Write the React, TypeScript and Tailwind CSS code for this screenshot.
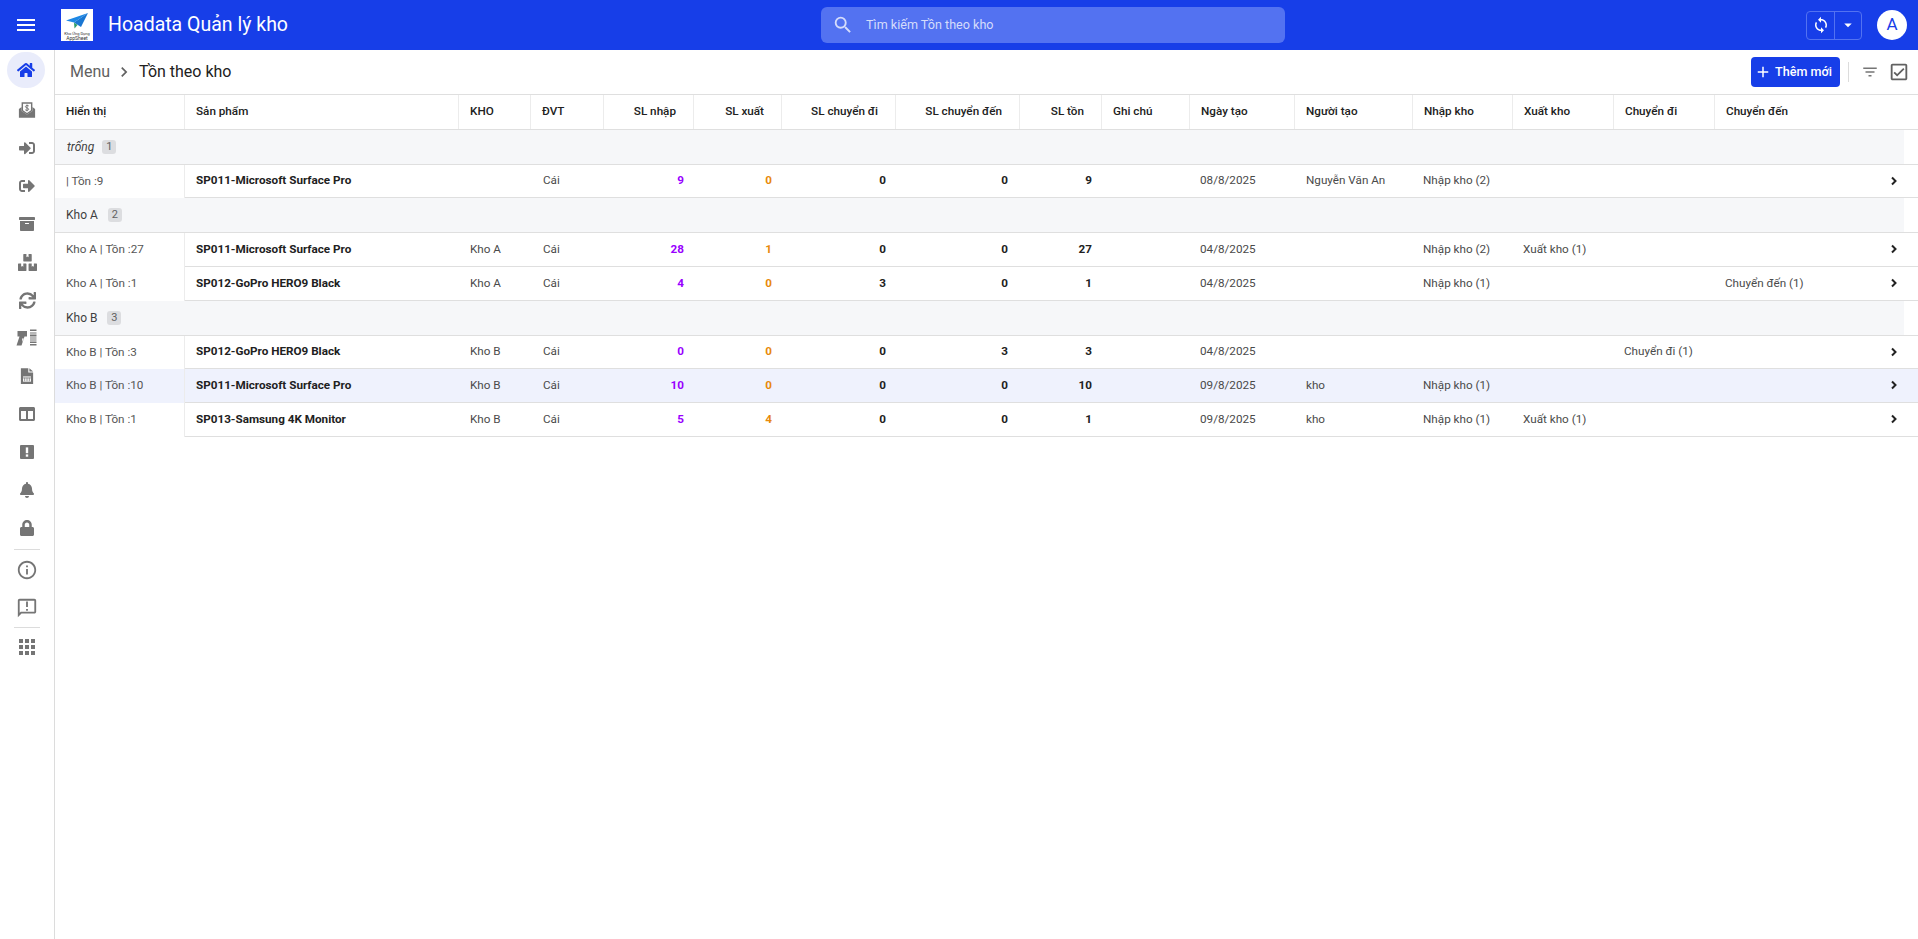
import React from "react";
import { FaHome, FaSignInAlt, FaSignOutAlt, FaArchive, FaBoxes, FaSync, FaColumns, FaBell, FaLock } from "react-icons/fa";
import { MdMenu, MdSearch, MdSync, MdArrowDropDown, MdChevronRight, MdAdd, MdFilterList, MdOutlineCheckBox, MdInfoOutline, MdOutlineAnnouncement, MdApps } from "react-icons/md";

const GRID = "grid grid-cols-[130px_274px_72px_73px_90px_88px_114px_124px_82px_88px_105px_118px_100px_101px_101px_1fr]";

function EnvelopeDollar() {
  return (
    <svg width="18" height="18" viewBox="0 0 20 20" fill="#757575">
      <path d="M1 9 L4 6.8 V11 L10 15 L16 11 V6.8 L19 9 V18.5 H1 Z" />
      <path d="M4 1.5 H16 V11 L10 15 L4 11 Z" fill="#757575" />
      <path d="M5.6 3 H14.4 V10.3 L10 13.2 L5.6 10.3 Z" fill="#fff" />
      <path d="M12 5.6 C11.6 4.9 8.3 4.6 8.2 6.2 C8.1 8 11.9 7.4 11.9 9.2 C11.9 10.8 8.5 10.6 8 9.7 M10 3.9 V11.4" fill="none" stroke="#757575" strokeWidth="1.1" />
    </svg>
  );
}

function Scanner() {
  return (
    <svg width="22" height="18" viewBox="0 0 22 18" fill="#757575">
      <path d="M1.5 2 H11 V7.5 H8.5 L5.5 16.5 H0.5 L3.5 7.5 H1.5 Z" />
      <path d="M6 9.5 H7.8 L6.6 13 Z" fill="#fff" />
      <rect x="14" y="0.5" width="6.5" height="1.5" />
      <rect x="14" y="3.5" width="6.5" height="1" />
      <rect x="14" y="5.5" width="6.5" height="2" />
      <rect x="14" y="8.5" width="6.5" height="1" />
      <rect x="14" y="10.5" width="6.5" height="1" />
      <rect x="14" y="12.5" width="6.5" height="1.5" />
      <rect x="14" y="15" width="6.5" height="1.5" />
    </svg>
  );
}

function FileSheet() {
  return (
    <svg width="14" height="18" viewBox="0 0 16 20" fill="#757575">
      <path d="M1 1 H9.5 V6 H15 V19 H1 Z" />
      <path d="M10.7 1 L15 4.9 H10.7 Z" />
      <rect x="3.5" y="10.5" width="9" height="6" fill="#fff" />
      <path d="M5.4 12 V16 M8 12 V16 M10.6 12 V16 M3.5 12.2 H12.5" stroke="#757575" strokeWidth="0.9" />
    </svg>
  );
}

function ExclSquare() {
  return (
    <svg width="16" height="16" viewBox="0 0 16 16" fill="#757575">
      <rect x="1" y="1" width="14" height="14" rx="1" />
      <rect x="6.8" y="3.4" width="2.4" height="5.8" fill="#fff" />
      <rect x="6.8" y="10.4" width="2.4" height="2.3" fill="#fff" />
    </svg>
  );
}

function Logo() {
  return (
    <div className="flex h-[32px] w-[32px] shrink-0 flex-col items-center bg-white pt-[3px]">
      <svg width="24" height="18" viewBox="0 0 24 18">
        <path d="M1 8.5 L23 1 L9 10.5 Z" fill="#1e88e5" />
        <path d="M23 1 L9 10.5 L16 15 Z" fill="#1976d2" />
        <path d="M9 10.5 L9.5 16.5 L12.5 13 Z" fill="#2e9e6b" />
      </svg>
      <span className="mt-[1px] text-center text-[4px] leading-[5px] text-[#333]">Kho Ứng Dụng</span>
      <span className="text-center text-[5px] leading-[5px] text-[#333]">AppSheet</span>
    </div>
  );
}

function Chevron() {
  return (
    <svg className="mb-[1px]" width="8" height="10" viewBox="0 0 8 10" fill="none" stroke="#222" strokeWidth="2">
      <path d="M2 1.5 L5.5 5 L2 8.5" />
    </svg>
  );
}

function SideItem({ children }: { children: React.ReactNode }) {
  return <div className="flex h-[38px] items-center justify-center">{children}</div>;
}

function Sidebar() {
  return (
    <aside className="flex w-[55px] shrink-0 flex-col border-r border-[#dcdcdc] pt-[2px]">
      <div className="mb-[3px] ml-[7px] flex h-[36px] w-[38px] items-center justify-center rounded-full bg-[#e9ecfb]">
        <FaHome size={18} color="#173ee8" />
      </div>
      <SideItem><EnvelopeDollar /></SideItem>
      <SideItem><FaSignInAlt size={16} color="#757575" /></SideItem>
      <SideItem><FaSignOutAlt size={16} color="#757575" /></SideItem>
      <SideItem><FaArchive size={16} color="#757575" /></SideItem>
      <SideItem><FaBoxes size={19} color="#757575" /></SideItem>
      <SideItem><FaSync size={17} color="#757575" /></SideItem>
      <SideItem><Scanner /></SideItem>
      <SideItem><FileSheet /></SideItem>
      <SideItem><FaColumns size={16} color="#757575" /></SideItem>
      <SideItem><ExclSquare /></SideItem>
      <SideItem><FaBell size={16} color="#757575" /></SideItem>
      <SideItem><FaLock size={16} color="#757575" /></SideItem>
      <div className="ml-[14px] mt-[2px] mb-[1px] h-px w-[26px] bg-[#dcdcdc]" />
      <SideItem><MdInfoOutline size={22} color="#757575" /></SideItem>
      <SideItem><MdOutlineAnnouncement size={22} color="#757575" /></SideItem>
      <div className="ml-[14px] h-px w-[26px] bg-[#dcdcdc]" />
      <SideItem><MdApps size={24} color="#757575" /></SideItem>
    </aside>
  );
}

function Header() {
  return (
    <header className="flex h-[50px] shrink-0 items-center bg-[#173ee8] text-white">
      <div className="ml-[14px] flex w-[24px] justify-center"><MdMenu size={24} /></div>
      <div className="ml-[23px]"><Logo /></div>
      <div className="ml-[15px] w-[713px] text-[19.5px]">Hoadata Quản lý kho</div>
      <div className="flex h-[36px] w-[464px] items-center rounded-[6px] bg-[#5372f1] pl-[11px] text-[12.6px] text-[#d5dcfb]">
        <MdSearch size={22} />
        <span className="ml-[12px]">Tìm kiếm Tồn theo kho</span>
      </div>
      <div className="ml-[521px] flex h-[29px] w-[56px] items-center rounded-[4px] border border-[#5372f1]">
        <div className="flex h-full w-[28px] items-center justify-center border-r border-[#5372f1]"><MdSync size={18} /></div>
        <div className="flex flex-1 items-center justify-center"><MdArrowDropDown size={18} /></div>
      </div>
      <div className="ml-[15px] flex h-[30px] w-[30px] items-center justify-center rounded-full bg-white text-[17px] text-[#173ee8]">A</div>
    </header>
  );
}

function Toolbar() {
  return (
    <div className="flex h-[44px] shrink-0 items-center">
      <span className="ml-[15px] text-[16px] text-[#616161]">Menu</span>
      <span className="ml-[4px] text-[#616161]"><MdChevronRight size={20} /></span>
      <span className="ml-[5px] text-[16px] text-[#212121]">Tồn theo kho</span>
      <div className="ml-auto mr-[8px] flex items-center">
        <button className="flex h-[30px] w-[89px] items-center rounded-[4px] bg-[#173ee8] pl-[3px] text-[12.6px] font-medium text-white">
          <MdAdd size={18} />
          <span className="ml-[3px]">Thêm mới</span>
        </button>
        <div className="ml-[8px] h-[20px] w-px bg-[#dcdcdc]" />
        <span className="ml-[12px] text-[#757575]"><MdFilterList size={18} /></span>
        <span className="ml-[9px] text-[#616161]"><MdOutlineCheckBox size={22} /></span>
      </div>
    </div>
  );
}

type Col = { t: string; right?: boolean };
const cols: Col[] = [
  { t: "Hiển thị" }, { t: "Sản phẩm" }, { t: "KHO" }, { t: "ĐVT" },
  { t: "SL nhập", right: true }, { t: "SL xuất", right: true }, { t: "SL chuyển đi", right: true },
  { t: "SL chuyển đến", right: true }, { t: "SL tồn", right: true }, { t: "Ghi chú" },
  { t: "Ngày tạo" }, { t: "Người tạo" }, { t: "Nhập kho" }, { t: "Xuất kho" }, { t: "Chuyển đi" }, { t: "Chuyển đến" },
];

function HeaderRow() {
  return (
    <div className={`${GRID} h-[36px] border-y border-[#dfdfdf] text-[11.7px] font-medium text-[#212121]`}>
      {cols.map((c, i) => (
        <div
          key={c.t}
          className={`flex items-center ${c.right ? "justify-end pr-[17px]" : "pl-[11px]"} ${i < 15 ? "border-r border-[#ececec]" : ""}`}
        >
          {c.t}
        </div>
      ))}
    </div>
  );
}

function Group({ name, n, italic, h }: { name: string; n: number; italic?: boolean; h: string }) {
  return (
    <div className={`${h} border-b border-[#dfdfdf]`}>
      <div className="flex h-full w-[1849px] items-center bg-[#f6f7f9] pl-[11px] text-[12px] text-[#3f3f3f]">
        <span className={italic ? "ml-[1px] italic" : ""}>{name}</span>
        <span className={`${italic ? "ml-[8px]" : "ml-[10px]"} flex h-[14px] w-[14px] items-center justify-center rounded-[3px] bg-[#dcdde0] text-[11px] text-[#616161]`}>{n}</span>
      </div>
    </div>
  );
}

type R = {
  show: string; p: string; kho?: string; n: number; x: number; cd: number; cden: number; t: number;
  date: string; by?: string; nk?: string; xk?: string; di?: string; den?: string; h: string; active?: boolean;
};

function Row({ r }: { r: R }) {
  const base = "flex items-center text-[#4a4a4a] border-b border-[#dfdfdf]";
  const body = `${base} pl-[11px]`;
  const tight = `${base} pl-[10px]`;
  const num = "flex items-center justify-end pr-[10px] font-bold border-b border-[#dfdfdf]";
  return (
    <div className={`${GRID} ${r.h} text-[11.7px] ${r.active ? "bg-[#eff2fd]" : ""}`}>
      <div className="flex items-center border-r border-[#ececec] pl-[11px] text-[#555]">{r.show}</div>
      <div className="flex items-center border-b border-[#dfdfdf] pl-[11px] font-bold text-[#212121]">{r.p}</div>
      <div className={body}>{r.kho}</div>
      <div className={`${base} pl-[12px]`}>Cái</div>
      <div className={`${num} text-[#9900ff]`}>{r.n}</div>
      <div className={`${num} text-[#e8890c]`}>{r.x}</div>
      <div className={`${num} text-[#212121]`}>{r.cd}</div>
      <div className="flex items-center justify-end border-b border-[#dfdfdf] pr-[12px] font-bold text-[#212121]">{r.cden}</div>
      <div className={`${num} text-[#212121]`}>{r.t}</div>
      <div className={body} />
      <div className={tight}>{r.date}</div>
      <div className={body}>{r.by}</div>
      <div className={tight}>{r.nk}</div>
      <div className={tight}>{r.xk}</div>
      <div className={tight}>{r.di}</div>
      <div className={`${tight} justify-between pr-[20px]`}>
        <span>{r.den}</span>
        <Chevron />
      </div>
    </div>
  );
}

const S11 = "SP011-Microsoft Surface Pro";
const S12 = "SP012-GoPro HERO9 Black";
const S13 = "SP013-Samsung 4K Monitor";

export default function App() {
  return (
    <div className="flex h-[939px] w-[1918px] flex-col overflow-hidden bg-white font-['Roboto',sans-serif]">
      <Header />
      <div className="flex min-h-0 flex-1">
        <Sidebar />
        <main className="min-w-0 flex-1">
          <Toolbar />
          <HeaderRow />
          <Group name="trống" n={1} italic h="h-[35px]" />
          <Row r={{ show: "| Tồn :9", p: S11, n: 9, x: 0, cd: 0, cden: 0, t: 9, date: "08/8/2025", by: "Nguyễn Văn An", nk: "Nhập kho (2)", h: "h-[33px]" }} />
          <Group name="Kho A" n={2} h="h-[35px]" />
          <Row r={{ show: "Kho A | Tồn :27", p: S11, kho: "Kho A", n: 28, x: 1, cd: 0, cden: 0, t: 27, date: "04/8/2025", nk: "Nhập kho (2)", xk: "Xuất kho (1)", h: "h-[34px]" }} />
          <Row r={{ show: "Kho A | Tồn :1", p: S12, kho: "Kho A", n: 4, x: 0, cd: 3, cden: 0, t: 1, date: "04/8/2025", nk: "Nhập kho (1)", den: "Chuyển đến (1)", h: "h-[34px]" }} />
          <Group name="Kho B" n={3} h="h-[35px]" />
          <Row r={{ show: "Kho B | Tồn :3", p: S12, kho: "Kho B", n: 0, x: 0, cd: 0, cden: 3, t: 3, date: "04/8/2025", di: "Chuyển đi (1)", h: "h-[33px]" }} />
          <Row r={{ show: "Kho B | Tồn :10", p: S11, kho: "Kho B", n: 10, x: 0, cd: 0, cden: 0, t: 10, date: "09/8/2025", by: "kho", nk: "Nhập kho (1)", h: "h-[34px]", active: true }} />
          <Row r={{ show: "Kho B | Tồn :1", p: S13, kho: "Kho B", n: 5, x: 4, cd: 0, cden: 0, t: 1, date: "09/8/2025", by: "kho", nk: "Nhập kho (1)", xk: "Xuất kho (1)", h: "h-[34px]" }} />
        </main>
      </div>
    </div>
  );
}
